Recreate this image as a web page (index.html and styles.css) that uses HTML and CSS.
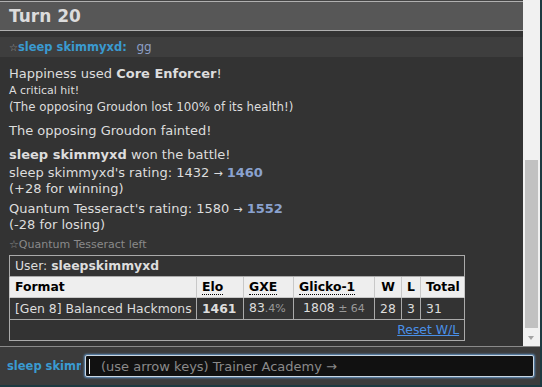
FILE: index.html
```html
<!DOCTYPE html>
<html lang="en">
<head>
    <meta charset="UTF-8">
    <meta name="viewport" content="width=device-width, initial-scale=1.0">
    <title>Battle log</title>
    <link rel="stylesheet" href="styles.css">
</head>
<body>
    <div class="app">
        <div class="main">
            <div class="log">
                <h2 class="turn">Turn 20</h2>
                <div class="chat"><span class="star">☆</span><strong class="name">sleep skimmyxd:</strong> <em class="msg">gg</em></div>
                <div class="history">Happiness used <strong>Core Enforcer</strong>!<br><small>A critical hit!</small><br><small class="wide">(The opposing Groudon lost 100% of its health!)</small></div>
                <div class="history gap">The opposing Groudon fainted!</div>
                <div class="history gap"><strong>sleep skimmyxd</strong> won the battle!</div>
                <div class="rating first">sleep skimmyxd's rating: 1432 <span class="to">&rarr;</span> <strong>1460</strong><br>(+28 for winning)</div>
                <div class="rating">Quantum Tesseract's rating: 1580 <span class="to">&rarr;</span> <strong>1552</strong><br>(-28 for losing)</div>
                <div class="notice">☆Quantum Tesseract left</div>
                <table class="ladder">
                    <colgroup>
                        <col class="c-format">
                        <col class="c-elo">
                        <col class="c-gxe">
                        <col class="c-glicko">
                        <col class="c-w">
                        <col class="c-l">
                        <col class="c-total">
                    </colgroup>
                    <tr>
                        <td colspan="7">User: <strong>sleepskimmyxd</strong></td>
                    </tr>
                    <tr class="head">
                        <th>Format</th>
                        <th><abbr>Elo</abbr></th>
                        <th><abbr>GXE</abbr></th>
                        <th><abbr>Glicko-1</abbr></th>
                        <th class="mid">W</th>
                        <th class="mid">L</th>
                        <th>Total</th>
                    </tr>
                    <tr>
                        <td>[Gen 8] Balanced Hackmons</td>
                        <td><strong>1461</strong></td>
                        <td>83<small>.4%</small></td>
                        <td class="mid">1808<small> &plusmn; 64</small></td>
                        <td>28</td>
                        <td>3</td>
                        <td>31</td>
                    </tr>
                    <tr>
                        <td colspan="7" class="right"><a href="#">Reset W/L</a></td>
                    </tr>
                </table>
            </div>
            <div class="scrollbar">
                <div class="thumb"></div>
                <div class="arrow"></div>
            </div>
        </div>
        <div class="chatbar">
            <div class="who">sleep skimmyxd</div>
            <div class="input"><span class="caret"></span><span class="placeholder">(use arrow keys) Trainer Academy &rarr;</span></div>
        </div>
    </div>
</body>
</html>
```

FILE: styles.css
```css
body {
    margin: 0;
    background: #1c3940;
    font-family: "DejaVu Sans", Verdana, sans-serif;
    color: #ddd;
}
.app {
    width: 540px;
    height: 385px;
    background: #3b3b3b;
}
.main {
    display: flex;
    height: 346px;
}
.log {
    flex: 1;
    background: #333;
    border-top: 1px solid #444;
    overflow: hidden;
}
.turn {
    margin: 0;
    height: 28px;
    padding-left: 9px;
    background: #575757;
    border-top: 1px solid #b0b0b0;
    border-bottom: 1px solid #b0b0b0;
    font-size: 17px;
    line-height: 28px;
    color: #dcdcdc;
}
.chat {
    margin-top: 6px;
    height: 20px;
    padding-left: 9px;
    background: #3e3e3e;
    font-size: 11.5px;
    line-height: 20px;
}
.star { color: #999; font-size: 10px; }
.name { color: #3a9ad0; }
.msg { font-style: normal; color: #8d9fc6; margin-left: 6px; font-size: 12px; }

.history {
    margin-top: 9px;
    padding-left: 9px;
    font-size: 13px;
    line-height: 16px;
}
.history small { font-size: 11px; }
.history small.wide { font-size: 11.8px; }
.history.gap { margin-top: 8px; }
.rating {
    margin-top: 5px;
    padding-left: 9px;
    font-size: 13px;
    line-height: 15px;
}
.rating.first { margin-top: 2px; }
.rating strong { color: #8aa2cf; }
.rating .to { font-size: 11px; }
.notice {
    margin-top: 5px;
    padding-left: 9px;
    font-size: 11px;
    line-height: 15px;
    color: #8a8a8a;
}

.ladder {
    margin: 3px 0 0 9px;
    width: 456px;
    table-layout: fixed;
    border-collapse: collapse;
    border: 1px solid #aaa;
    font-size: 12.4px;
    line-height: 16px;
}
.c-format { width: 187px; }
.c-elo { width: 47px; }
.c-gxe { width: 50px; }
.c-glicko { width: 81px; }
.c-w { width: 27px; }
.c-l { width: 19px; }
.c-total { width: 44px; }
.ladder td, .ladder th {
    padding: 2px 5px;
    border: 1px solid #aaa;
    text-align: left;
    white-space: nowrap;
    overflow: hidden;
}
.ladder .head th {
    background: #eee;
    color: #000;
    border-color: #c8c8c8;
}
.ladder abbr {
    text-decoration: none;
    border-bottom: 1px dotted #000;
}
.ladder small { font-size: 11px; color: #999; }
.ladder .mid { text-align: center; }
.ladder .right { text-align: right; }
.ladder a { color: #4a90e8; }

.scrollbar {
    width: 17px;
    background: #f1f1f1;
}
.thumb {
    margin: 160px 0 0 2px;
    width: 13px;
    height: 168px;
    background: #c1c1c1;
}
.arrow {
    margin: 8px 0 0 5px;
    width: 0;
    height: 0;
    border-top: 4px solid #a3a3a3;
    border-left: 3.5px solid transparent;
    border-right: 3.5px solid transparent;
}

.chatbar {
    display: flex;
    align-items: center;
    height: 38px;
    border-top: 1px solid #8a8a8a;
}
.who {
    width: 74px;
    margin-left: 7px;
    overflow: hidden;
    white-space: nowrap;
    font-size: 11.5px;
    font-weight: bold;
    color: #3a9ad0;
}
.input {
    display: flex;
    align-items: center;
    margin-left: 4px;
    width: 447px;
    height: 20px;
    background: #111;
    border: 1px solid #c9d6e2;
    border-radius: 2px;
    box-shadow: 0 0 2px 1px #5f8fbd;
    font-size: 13px;
}
.caret {
    width: 1px;
    height: 15px;
    margin-left: 3px;
    background: #eee;
}
.placeholder {
    margin-left: 11px;
    color: #8a8a8a;
}
```
